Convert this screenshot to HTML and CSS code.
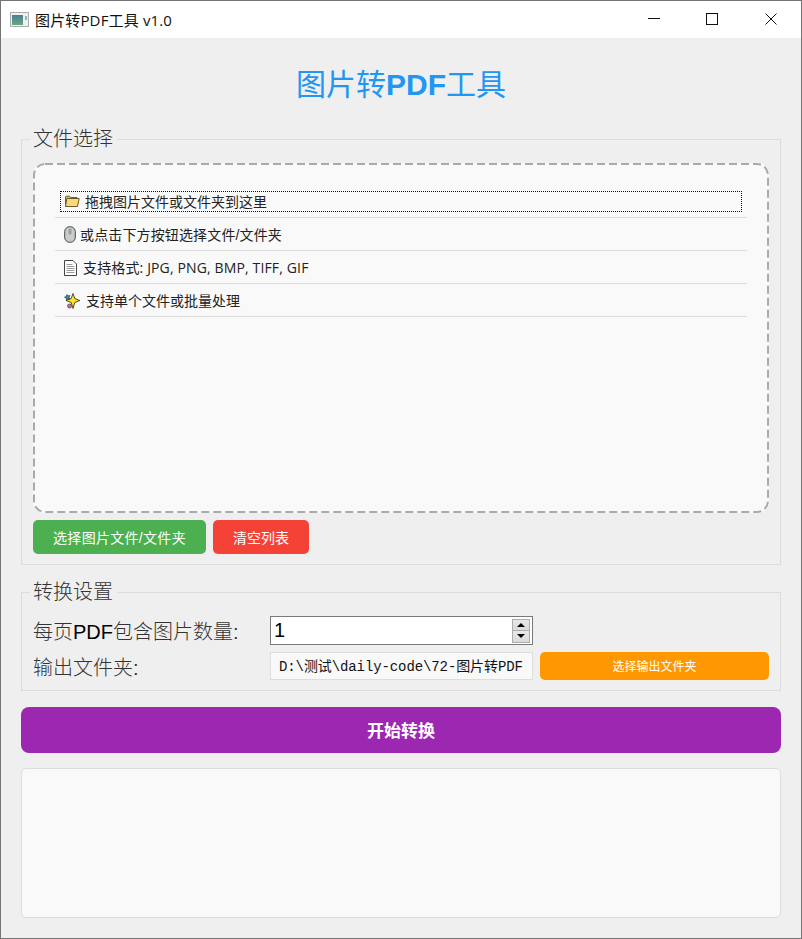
FILE: index.html
```html
<!DOCTYPE html>
<html lang="zh-CN">
<head>
<meta charset="utf-8">
<title>图片转PDF工具 v1.0</title>
<link rel="stylesheet" href="styles.css">
</head>
<body>
<div class="window">
  <header class="titlebar">
    <svg class="app-icon" width="20" height="16" viewBox="0 0 20 16">
      <defs><linearGradient id="g" x1="0" y1="0" x2="0" y2="1"><stop offset="0" stop-color="#4a7f98"/><stop offset="1" stop-color="#6aa67c"/></linearGradient></defs>
      <rect x="0.5" y="0.5" width="18" height="14" fill="#eef1f1" stroke="#a9adb0"/>
      <rect x="2" y="3" width="11" height="10" fill="url(#g)"/>
      <rect x="15" y="4" width="2" height="4" fill="#8fb8a8"/>
    </svg>
    <span class="title-text">图片转PDF工具 v1.0</span>
    <div class="win-controls">
      <div class="win-btn"><svg class="win-ico" width="12" height="12" viewBox="0 0 12 12"><path d="M1 5.500h12" stroke="#111" fill="none"/></svg></div>
      <div class="win-btn"><svg class="win-ico" width="12" height="12" viewBox="0 0 12 12"><rect x="0.5" y="0.5" width="11" height="11" stroke="#111" fill="none"/></svg></div>
      <div class="win-btn"><svg class="win-ico" width="12" height="12" viewBox="0 0 12 12"><path d="M0.500 0.500l11 11M11.500 0.500l-11 11" stroke="#111" fill="none"/></svg></div>
    </div>
  </header>
  <main class="content">
    <h1 class="app-title">图片转<b>PDF</b>工具</h1>

    <fieldset class="group">
      <legend class="group-title">文件选择</legend>
      <div class="drop-area">
        <svg class="drop-frame" width="736" height="350" viewBox="0 0 736 350"><rect x="1" y="1" width="734" height="348" rx="11" fill="none" stroke="#aaa" stroke-width="2" stroke-dasharray="8 4"/></svg>
        <div class="file-row">
          <div class="row-inner focused">
            <svg class="ico" width="16" height="13" viewBox="0 0 16 13"><path d="M1.500 11.500V1.700l.5-.5h3.600l1 1.300h6.400v1" fill="#e8b93f" stroke="#6a5c30"/><path d="M1.500 11.500l1.300-8h12.400l-1.700 8z" fill="#fcd877" stroke="#6a5c30" stroke-linejoin="round"/></svg>
            <span class="row-text gap-5">拖拽图片文件或文件夹到这里</span>
          </div>
        </div>
        <div class="file-row">
          <div class="row-inner">
            <svg class="ico" width="12" height="17" viewBox="0 0 12 17"><rect x="0.700" y="0.700" width="10.600" height="15.600" rx="5" fill="#c9cccc" stroke="#444"/><rect x="4.500" y="2.500" width="3" height="6" rx="1.500" fill="#9a9d9d"/></svg>
            <span class="row-text gap-4 track-s">或点击下方按钮选择文件/文件夹</span>
          </div>
        </div>
        <div class="file-row">
          <div class="row-inner">
            <svg class="ico" width="13" height="16" viewBox="0 0 13 16"><path d="M0.500 0.500h8.500l3.500 3.500v11.500h-12z" fill="#fff" stroke="#444"/><path d="M2.500 4.500h6M2.500 6.500h8M2.500 8.500h8M2.500 10.500h8M2.500 12.500h8" stroke="#999" fill="none"/></svg>
            <span class="row-text gap-6 track-s">支持格式: JPG, PNG, BMP, TIFF, GIF</span>
          </div>
        </div>
        <div class="file-row">
          <div class="row-inner">
            <svg class="ico" width="16" height="16" viewBox="0 0 16 16"><path d="M9 0.500l1.800 5 5 2-5 2-1.800 6-1.800-6-5-2 5-2z" fill="#ffe41a" stroke="#222" stroke-width="0.800" stroke-linejoin="round"/><path d="M3 1.500l1 1.500 2-.5-1 2 1 1.500-2-.3-1.500 1.500-.3-2-1.700-1 1.800-.7z" fill="#2f8fc0" stroke="#222" stroke-width="0.600"/><circle cx="5.500" cy="13" r="2" fill="#d86fa8" stroke="#222" stroke-width="0.600"/></svg>
            <span class="row-text gap-6">支持单个文件或批量处理</span>
          </div>
        </div>
      </div>
      <div class="btn-row">
        <button class="btn btn-green">选择图片文件/文件夹</button>
        <button class="btn btn-red">清空列表</button>
      </div>
    </fieldset>

    <fieldset class="group settings">
      <legend class="group-title">转换设置</legend>
      <div class="setting-row row-count">
        <label class="setting-label">每页<span class="latin">PDF</span>包含图片数量:</label>
        <div class="spinbox">
          <span class="spin-value">1</span>
          <div class="spin-btns">
            <div class="spin-btn"><i class="arrow-up"></i></div>
            <div class="spin-btn"><i class="arrow-down"></i></div>
          </div>
        </div>
      </div>
      <div class="setting-row row-output">
        <label class="setting-label">输出文件夹:</label>
        <div class="path-box">D:\测试\daily-code\72-图片转PDF</div>
        <button class="btn btn-orange">选择输出文件夹</button>
      </div>
    </fieldset>

    <button class="btn btn-start">开始转换</button>
    <div class="log-box"></div>
  </main>
</div>
</body>
</html>
```
FILE: styles.css
```css
* { box-sizing: border-box; }
html, body { margin: 0; padding: 0; }
body {
  width: 802px;
  height: 939px;
  overflow: hidden;
  font-family: "Liberation Sans", "Noto Sans CJK SC", sans-serif;
  color: #111;
}
.window {
  width: 802px;
  height: 939px;
  border: 1px solid #757575;
  background: #efefef;
  display: flex;
  flex-direction: column;
}
.titlebar {
  height: 37px;
  flex: none;
  background: #fff;
  display: flex;
  align-items: center;
  padding-left: 9px;
}
.app-icon { flex: none; margin-top: 1px; }
.title-text {
  margin-left: 5px;
  font: 15px "Open Sans", "Noto Sans CJK SC", sans-serif;
  letter-spacing: 0.15px;
  color: #111;
}
.win-controls { margin-left: auto; margin-right: 1px; display: flex; gap: 1px; }
.win-btn {
  width: 58px;
  height: 37px;
  display: flex;
  justify-content: center;
  padding-top: 12px;
}
.win-ico { overflow: visible; display: block; }
.content {
  flex: 1;
  padding: 0 20px;
  display: flex;
  flex-direction: column;
}
.app-title {
  margin: 27px 0 23px;
  height: 40px;
  line-height: 40px;
  text-align: center;
  font-size: 30px;
  font-weight: 400;
  color: #2196f3;
}
.app-title b { font-weight: 700; }
.group {
  margin: 0;
  min-width: 0;
  border: 1px solid #dcdcdc;
  padding: 12px 11px 10px;
}
.group-title {
  margin-left: -3px;
  padding: 0 4px 0 3px;
  height: 23px;
  line-height: 23px;
  font-size: 20px;
  font-weight: 300;
  color: #333;
}
.drop-area {
  position: relative;
  height: 350px;
  border-radius: 11px;
  background: #f9f9f9;
  padding: 22px;
}
.drop-frame { position: absolute; left: 0; top: 0; display: block; }
.file-row {
  height: 33px;
  border-bottom: 1px solid #ddd;
  padding: 6px 5px 5px;
  font-size: 14px;
  color: #222;
}
.row-inner {
  height: 21px;
  padding-left: 3px;
  display: flex;
  align-items: center;
  border: 1px dotted transparent;
}
.row-inner.focused { border-color: #111; }
.ico { flex: none; }
.row-text { margin-bottom: 2px; }
.gap-4 { margin-left: 4px; }
.gap-5 { margin-left: 5px; }
.gap-6 { margin-left: 6px; font-family: "Open Sans", "Noto Sans CJK SC", sans-serif; }
.track-s { letter-spacing: 0.14px; }
.btn-row { display: flex; gap: 7px; margin-top: 7px; }
.btn {
  border: 0;
  padding: 0;
  color: #fff;
  font-family: inherit;
  display: block;
}
.btn-green, .btn-red { height: 34px; border-radius: 5px; font-size: 14px; }
.btn-green { width: 173px; background: #4caf50; letter-spacing: 0.3px; }
.btn-red { width: 96px; background: #f44336; }
.settings { margin-top: 16px; }
.setting-row { display: flex; align-items: center; }
.row-count { height: 29px; }
.row-output { height: 28px; margin-top: 7px; }
.setting-label {
  width: 237px;
  flex: none;
  font-size: 20px;
  font-weight: 300;
  color: #333;
}
.latin { color: #000; }
.spinbox {
  width: 263px;
  height: 29px;
  border: 1px solid #7a7a7a;
  background: #fff;
  display: flex;
  align-items: center;
  padding: 0 2px 0 3px;
}
.spin-value { font-size: 20px; color: #000; flex: 1; }
.spin-btns { width: 18px; height: 24px; display: flex; flex-direction: column; }
.spin-btn {
  flex: 1;
  border: 1px solid #adadad;
  background: linear-gradient(#e8e8e8, #dadada);
  display: flex;
  align-items: center;
  justify-content: center;
}
.spin-btn + .spin-btn { border-top: 0; }
.arrow-up, .arrow-down {
  width: 0;
  height: 0;
  border-left: 4px solid transparent;
  border-right: 4px solid transparent;
}
.arrow-up { border-bottom: 4px solid #000; }
.arrow-down { border-top: 4px solid #000; }
.path-box {
  width: 263px;
  height: 28px;
  flex: none;
  border: 1px solid #ddd;
  background: #f9f9f9;
  padding: 1px 0 0 8px;
  font: 14px/26px "Liberation Mono", "Noto Sans CJK SC", monospace;
  letter-spacing: -0.1px;
  white-space: nowrap;
  overflow: hidden;
  color: #111;
}
.btn-orange {
  margin-left: 7px;
  flex: 1;
  height: 28px;
  padding-bottom: 2px;
  border-radius: 5px;
  background: #ff9800;
  font-size: 12px;
}
.btn-start {
  margin-top: 16px;
  height: 46px;
  padding-bottom: 2px;
  flex: none;
  border-radius: 8px;
  background: #9c27b0;
  font-size: 17px;
  font-weight: 700;
}
.log-box {
  margin-top: 15px;
  height: 150px;
  flex: none;
  border: 1px solid #ddd;
  border-radius: 5px;
  background: #f9f9f9;
}
```
